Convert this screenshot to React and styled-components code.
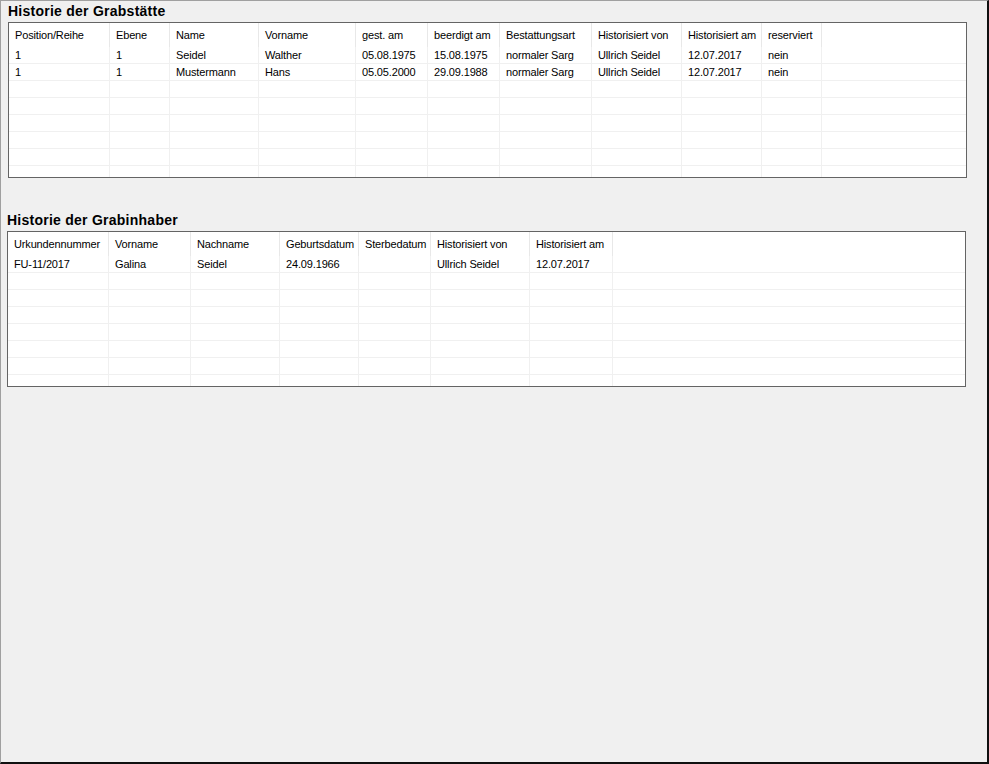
import React from 'react';
import styled, { createGlobalStyle } from 'styled-components';

const GlobalStyle = createGlobalStyle`
  * { box-sizing: border-box; }
  html, body { margin: 0; padding: 0; background: #f0f0f0; }
  body { font-family: "Liberation Sans", Arial, sans-serif; font-size: 11px; color: #000; }
`;

const Frame = styled.div`
  width: 989px;
  height: 764px;
  background: #f0f0f0;
  border-style: solid;
  border-width: 1px 2px 2px 1px;
  border-color: #a0a0a0 #101010 #101010 #a0a0a0;
  display: flex;
  flex-direction: column;
  overflow: hidden;
`;

const Section = styled.section`
  display: flex;
  flex-direction: column;
  padding-left: ${p => p.$indent}px;
  margin-top: ${p => p.$top}px;
`;

const Title = styled.h2`
  margin: 0;
  height: 21px;
  line-height: 21px;
  font-family: "Liberation Sans", Arial, sans-serif;
  font-size: 14px;
  letter-spacing: 0.25px;
  font-weight: bold;
  color: #000;
`;

const Grid = styled.div`
  width: 959px;
  height: ${p => p.$height}px;
  background: #fff;
  border: 1px solid #646464;
  display: flex;
  flex-direction: column;
  overflow: hidden;
`;

const HeaderRow = styled.div`
  display: flex;
  height: 24px;
  flex-shrink: 0;
`;

const HeaderCell = styled.div`
  width: ${p => p.$w}px;
  flex-shrink: 0;
  padding: 1px 0 0 6px;
  line-height: 22px;
  letter-spacing: -0.15px;
  border-right: 1px solid #e8e8e8;
  white-space: nowrap;
  overflow: hidden;
`;

const Row = styled.div`
  display: flex;
  height: 17px;
  flex-shrink: 0;
  border-bottom: 1px solid #f0f0f0;
`;

const Cell = styled.div`
  width: ${p => p.$w}px;
  flex-shrink: 0;
  padding: 1px 0 0 6px;
  line-height: 15px;
  letter-spacing: -0.15px;
  border-right: 1px solid #f0f0f0;
  white-space: nowrap;
  overflow: hidden;
`;

const Filler = styled.div`
  flex: 1;
`;

const graveColumns = [
  { title: 'Position/Reihe', w: 101 },
  { title: 'Ebene', w: 60 },
  { title: 'Name', w: 89 },
  { title: 'Vorname', w: 97 },
  { title: 'gest. am', w: 72 },
  { title: 'beerdigt am', w: 72 },
  { title: 'Bestattungsart', w: 92 },
  { title: 'Historisiert von', w: 90 },
  { title: 'Historisiert am', w: 80 },
  { title: 'reserviert', w: 60 },
];

const graveRows = [
  ['1', '1', 'Seidel', 'Walther', '05.08.1975', '15.08.1975', 'normaler Sarg', 'Ullrich Seidel', '12.07.2017', 'nein'],
  ['1', '1', 'Mustermann', 'Hans', '05.05.2000', '29.09.1988', 'normaler Sarg', 'Ullrich Seidel', '12.07.2017', 'nein'],
];

const ownerColumns = [
  { title: 'Urkundennummer', w: 101 },
  { title: 'Vorname', w: 82 },
  { title: 'Nachname', w: 89 },
  { title: 'Geburtsdatum', w: 79 },
  { title: 'Sterbedatum', w: 72 },
  { title: 'Historisiert von', w: 99 },
  { title: 'Historisiert am', w: 83 },
];

const ownerRows = [
  ['FU-11/2017', 'Galina', 'Seidel', '24.09.1966', '', 'Ullrich Seidel', '12.07.2017'],
];

function DataGrid({ columns, rows, height, totalRows }) {
  const filled = [...rows];
  while (filled.length < totalRows) filled.push(columns.map(() => ''));

  return (
    <Grid $height={height}>
      <HeaderRow>
        {columns.map(col => (
          <HeaderCell key={col.title} $w={col.w}>{col.title}</HeaderCell>
        ))}
      </HeaderRow>
      {filled.map((row, i) => (
        <Row key={i}>
          {row.map((value, j) => (
            <Cell key={j} $w={columns[j].w}>{value}</Cell>
          ))}
          <Filler />
        </Row>
      ))}
    </Grid>
  );
}

export default function App() {
  return (
    <>
      <GlobalStyle />
      <Frame>
        <Section $indent={7} $top={0}>
          <Title>Historie der Grabstätte</Title>
          <DataGrid columns={graveColumns} rows={graveRows} height={156} totalRows={8} />
        </Section>
        <Section $indent={6} $top={32}>
          <Title>Historie der Grabinhaber</Title>
          <DataGrid columns={ownerColumns} rows={ownerRows} height={156} totalRows={8} />
        </Section>
      </Frame>
    </>
  );
}
